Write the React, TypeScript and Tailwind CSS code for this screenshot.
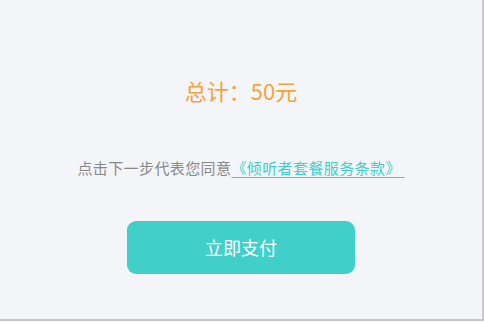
import React from 'react';

export default function App() {
  return (
    <div className="w-[484px] h-[322px] bg-[#f4f5f9] font-['Noto_Sans_CJK_SC','Noto_Sans',sans-serif]">
      <div className="w-[484px] h-[321px] border-r-2 border-b-2 border-[#c9c9cc] flex flex-col items-center pt-[75px]">
        <div className="text-[22px] leading-[30px] text-[#f3a33c]">总计：50元</div>
        <p className="mt-[52px] text-[15px] leading-[22px] tracking-[0.4px] text-[#888888] whitespace-nowrap">
          点击下一步代表您同意
          <a className="text-[#3fcfcb] underline decoration-[#3fcfcb] underline-offset-[3px] decoration-1">
            《倾听者套餐服务条款》&nbsp;
          </a>
        </p>
        <button className="mt-[42px] w-[228px] h-[53px] rounded-[9px] bg-[#41cfca] text-white text-[18px]">
          立即支付
        </button>
      </div>
    </div>
  );
}
